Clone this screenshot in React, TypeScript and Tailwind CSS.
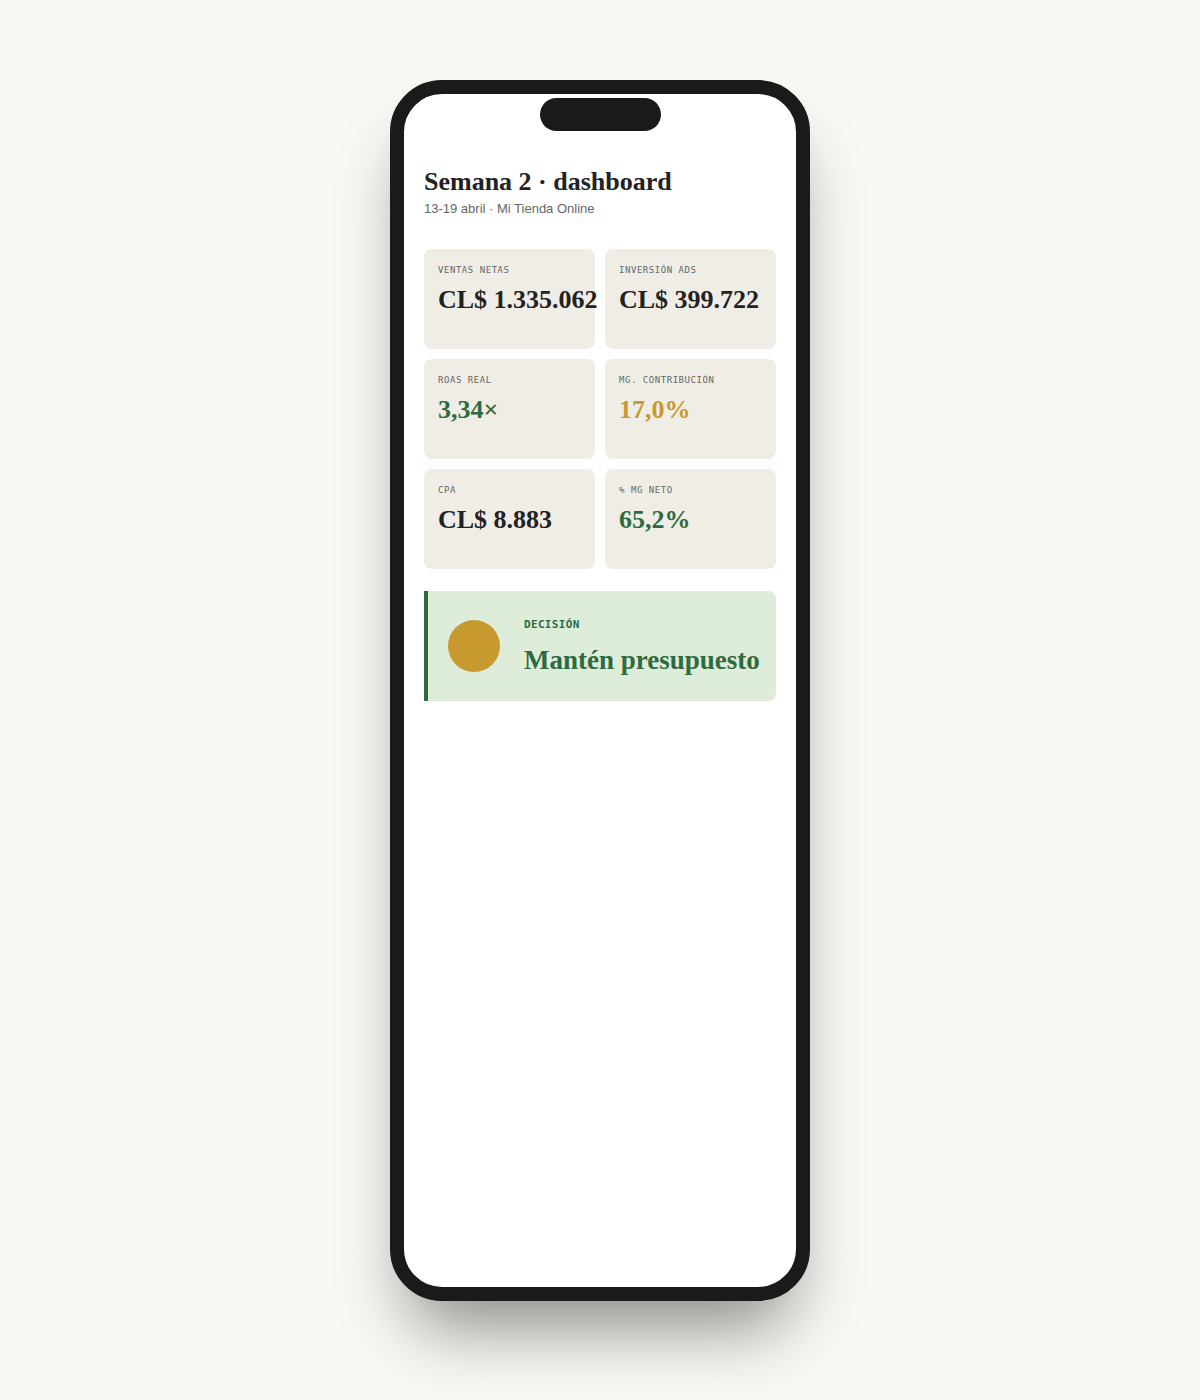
import React from "react";

type Tone = "ink" | "green" | "gold";

interface Metric {
  label: string;
  value: string;
  tone: Tone;
}

const metrics: Metric[] = [
  { label: "Ventas netas", value: "CL$ 1.335.062", tone: "ink" },
  { label: "Inversión ads", value: "CL$ 399.722", tone: "ink" },
  { label: "ROAS real", value: "3,34×", tone: "green" },
  { label: "Mg. contribución", value: "17,0%", tone: "gold" },
  { label: "CPA", value: "CL$ 8.883", tone: "ink" },
  { label: "% Mg neto", value: "65,2%", tone: "green" },
];

const toneClass: Record<Tone, string> = {
  ink: "text-[#222222]",
  green: "text-[#2e6b40]",
  gold: "text-[#c8992e]",
};

const serif = "font-['Liberation_Serif',Georgia,serif]";
const mono = "font-['DejaVu_Sans_Mono',monospace]";

function MetricCard({ label, value, tone }: Metric) {
  return (
    <div className="h-[100px] rounded-lg bg-[#f0ede7] px-[14px] pt-[15px]">
      <div className={`${mono} text-[9px] leading-[12px] uppercase tracking-[0.06em] text-[#666666]`}>
        {label}
      </div>
      <div className={`${serif} mt-[9px] whitespace-nowrap text-[26px] font-bold leading-[30px] ${toneClass[tone]}`}>
        {value}
      </div>
    </div>
  );
}

export default function App() {
  return (
    <div className="min-h-screen bg-[#f9f8f4] pt-20 pb-24">
      <div className="mx-auto h-[1221px] w-[420px] rounded-[52px] border-[14px] border-[#1a1a1a] bg-white shadow-[0_45px_70px_-20px_rgba(0,0,0,0.45)]">
        {/* dynamic island */}
        <div className="mx-auto mt-1 h-[33px] w-[121px] rounded-full bg-[#1a1a1a]" />

        <div className="px-5 pt-9">
          <h1 className={`${serif} text-[26px] font-bold leading-[30px] text-[#222222]`}>
            Semana 2 · dashboard
          </h1>
          <p className="mt-1 font-['Liberation_Sans',Arial,sans-serif] text-[13px] leading-4 text-[#666666]">
            13-19 abril · Mi Tienda Online
          </p>

          <div className="mt-8 grid grid-cols-2 gap-2.5">
            {metrics.map((m) => (
              <MetricCard key={m.label} {...m} />
            ))}
          </div>

          <div className="mt-[22px] flex h-[110px] items-center gap-6 rounded-r-lg border-l-4 border-[#2e6b40] bg-[#deedda] pl-5 pr-4">
            <div className="h-[52px] w-[52px] shrink-0 rounded-full bg-[#c8992e]" />
            <div>
              <div className={`${mono} text-[11px] font-bold leading-4 tracking-[0.03em] text-[#2e6b40]`}>
                DECISIÓN
              </div>
              <div className={`${serif} mt-3 whitespace-nowrap text-[27px] font-bold leading-[30px] text-[#2e6b40]`}>
                Mantén presupuesto
              </div>
            </div>
          </div>
        </div>
      </div>
    </div>
  );
}
